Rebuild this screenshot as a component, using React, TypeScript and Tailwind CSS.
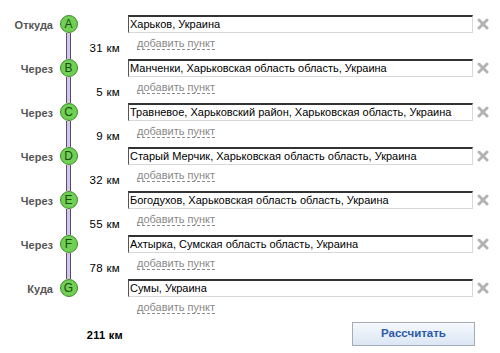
import React from 'react'

type Stop = { label: string; letter: string; value: string; dist?: string }

const stops: Stop[] = [
  { label: 'Откуда', letter: 'A', value: 'Харьков, Украина', dist: '31 км' },
  { label: 'Через', letter: 'B', value: 'Манченки, Харьковская область область, Украина', dist: '5 км' },
  { label: 'Через', letter: 'C', value: 'Травневое, Харьковский район, Харьковская область, Украина', dist: '9 км' },
  { label: 'Через', letter: 'D', value: 'Старый Мерчик, Харьковская область область, Украина', dist: '32 км' },
  { label: 'Через', letter: 'E', value: 'Богодухов, Харьковская область область, Украина', dist: '55 км' },
  { label: 'Через', letter: 'F', value: 'Ахтырка, Сумская область область, Украина', dist: '78 км' },
  { label: 'Куда', letter: 'G', value: 'Сумы, Украина' },
]

function RemoveIcon() {
  return (
    <svg width="12" height="12" viewBox="0 0 12 12">
      <path d="M2 2 L10 10 M10 2 L2 10" stroke="#b3b3b3" strokeWidth="3" strokeLinecap="round" />
    </svg>
  )
}

export default function App() {
  return (
    <div className="w-[500px] h-[353px] bg-white pt-[15px] font-['Liberation_Sans',Arial,sans-serif] text-[11px] text-black">
      {/* Route points */}
      {stops.map((s, i) => (
        <div key={s.letter} className="flex h-[44px]">
          <div className="w-[53px] text-right font-bold text-[#555] leading-[19px] pt-[1px]">{s.label}</div>
          <div className="w-[31px] flex flex-col items-center">
            <div className="w-[18px] h-[18px] rounded-full bg-[#6fd053] border border-[#3f8a2c] flex items-center justify-center text-[12px] leading-none text-[#1d4a14] shrink-0">
              {s.letter}
            </div>
            {i < stops.length - 1 && (
              <div className="flex-1 w-[5px] bg-[#d4c4ee] border-x border-[#5a4f6a]" />
            )}
          </div>
          <div className="w-[36px] text-right pt-[26px] leading-[14px] text-[11.5px] tracking-[0.3px]">{s.dist}</div>
          <div className="ml-[8px] w-[345px]">
            <div className="h-[18px] border-t-2 border-l border-t-[#333] border-l-[#555] border-r border-b border-r-[#d8d8d8] border-b-[#d8d8d8] pl-[1px] leading-[15px] whitespace-nowrap overflow-hidden">
              {s.value}
            </div>
            <div className="mt-[3px] ml-[9px] leading-[14px]">
              <span className="text-[#8a8a8a] border-b border-dashed border-[#8a8a8a]">добавить пункт</span>
            </div>
          </div>
          <div className="ml-[4px] pt-[3px]">
            <RemoveIcon />
          </div>
        </div>
      ))}

      {/* Footer */}
      <div className="flex items-center -mt-[1px]">
        <div className="w-[123px] text-right font-bold tracking-[0.3px] pt-[2px]">211 км</div>
        <button className="ml-[229px] w-[123px] h-[24px] border border-[#a3abb6] bg-gradient-to-b from-[#f6f9fd] to-[#dbe6f4] text-[#2b5aa8] font-bold text-[11.5px]">
          Рассчитать
        </button>
      </div>
    </div>
  )
}
